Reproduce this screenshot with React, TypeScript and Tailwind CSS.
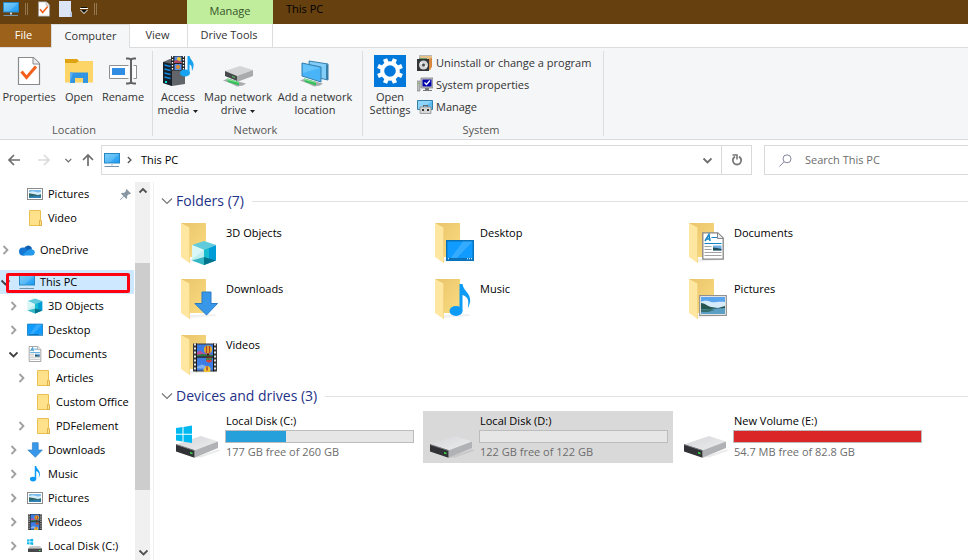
import { useId, useState } from "react";
import type { ReactNode } from "react";

/* ---------- small icons (16px) ---------- */

function MonitorIcon({ className = "size-4" }: { className?: string }) {
  const id = useId();
  return (
    <svg viewBox="0 0 16 16" className={className} aria-hidden="true">
      <defs>
        <linearGradient id={id} x1="0" y1="0" x2="1" y2="1">
          <stop offset="0" stopColor="#69c9f8" />
          <stop offset="1" stopColor="#1a98f2" />
        </linearGradient>
      </defs>
      <rect x=".5" y="1.5" width="15" height="9.5" fill={`url(#${id})`} stroke="#2787c4" />
      <path d="M1 2h14L6 10.5H1z" fill="#fff" opacity=".14" />
      <path d="M7 11.5h2v2H7z" fill="#c6d6e2" />
      <path d="M1 14h14v1H0z" fill="#7294ac" />
    </svg>
  );
}

function PictureIcon() {
  return (
    <svg viewBox="0 0 16 16" className="size-4" aria-hidden="true">
      <rect x=".5" y="2.5" width="15" height="11" fill="#fff" stroke="#8b8b8b" />
      <path d="M2 4h12v8H2z" fill="#7cbdf0" />
      <path d="M2 6l4-.7 5 1.2 3-.8v3H2z" fill="#d8edf8" />
      <path d="M2 7.2c3 .4 6 1.2 9 2l3-1V12H2z" fill="#31686a" />
      <path d="M2 10.8l7-.8 5 .3V12H2z" fill="#2f83b9" />
    </svg>
  );
}

function SmallFolderIcon() {
  return (
    <svg viewBox="0 0 16 16" className="size-4" aria-hidden="true">
      <path d="M2.500.5h11v9.500l1 1v4.500h-12z" fill="#ffe18b" stroke="#e9c04f" />
      <path d="M12.500 10.500l2 .5v4.500h-2z" fill="#ffe18b" stroke="#dba93a" strokeWidth=".8" />
    </svg>
  );
}

function OneDriveIcon() {
  return (
    <svg viewBox="0 0 16 16" className="size-4 overflow-visible" aria-hidden="true">
      <path d="M5 6.500a4.300 4.300 0 0 1 7.500-1.200L13 8l-8 2z" fill="#0f5fb0" />
      <circle cx="4" cy="9.500" r="4" fill="#1678d3" />
      <path d="M5 5.800l7 4.200-8 3.500z" fill="#1678d3" />
      <path d="M3 13.500h10a3 3 0 0 0 .6-5.900 4 4 0 0 0-4.800.7z" fill="#2498ea" />
    </svg>
  );
}

function CubeIcon({ className = "size-4" }: { className?: string }) {
  return (
    <svg viewBox="0 0 26 26" className={className} aria-hidden="true">
      <path d="M1 5L13 1l12 4-12 5z" fill="#5fcbdc" />
      <path d="M1 5l12 5v15L1 20.500z" fill="#bfeef0" />
      <path d="M1 5l12 5-12 9z" fill="#d9f7f6" />
      <path d="M13 10l12-5v15.500L13 25z" fill="#009cd6" />
      <path d="M13 10l5-2v14l-5 3z" fill="#16bdd0" />
      <path d="M1 20.500L13 17v8z" fill="#35b6c5" />
      <path d="M13 17l12 3.500L13 25z" fill="#00738c" />
    </svg>
  );
}

function DesktopIcon({ className = "size-4" }: { className?: string }) {
  return (
    <svg viewBox="0 0 28 22" className={className} aria-hidden="true">
      <path d="M.7.700h26.600v19.600H.7z" fill="#0f9bff" stroke="#0873ba" strokeWidth="1.400" />
      <path d="M17 1.400h9.600L10 19H4z" fill="#4db5ff" opacity=".6" />
      <path d="M1.400 18h25.200v1.600H1.400z" fill="#0d6fb5" />
      <path d="M2 18.300h1v1H2zM21 18.300h1v1h-1zM23 18.300h1v1h-1zM25 18.300h1v1h-1z" fill="#fff" />
    </svg>
  );
}

function DocumentIcon({ className = "size-4" }: { className?: string }) {
  return (
    <svg viewBox="0 0 22 28" className={className} aria-hidden="true">
      <path d="M.8.800h15L21.200 6v21.200H.8z" fill="#fff" stroke="#858585" strokeWidth="1.300" />
      <path d="M15.500 1v5.500H21" fill="#ececec" stroke="#858585" />
      <path d="M3 9l4-6.500L8 9M4.500 7h4" fill="none" stroke="#1584c6" strokeWidth="1.500" />
      <path d="M9.500 5.500H15M2.500 11.500h17" stroke="#1584c6" strokeWidth="1.200" />
      <path d="M2.500 14.500h7M2.500 17.500h7M2.500 20.500h17M2.500 23.500h17" stroke="#a2a2a2" />
      <path d="M11 13.500h8.500v5H11z" fill="#72afe4" />
      <path d="M11 15.500l4 .5 4.500 1v1.500H11z" fill="#224e59" />
    </svg>
  );
}

function DownArrowIcon({ className = "size-4" }: { className?: string }) {
  return (
    <svg viewBox="0 0 24 25" className={className} aria-hidden="true">
      <path d="M8 1h9v11.500h6.500L12.500 24 .8 12.500H8z" fill="#3997e9" stroke="#287cc5" />
    </svg>
  );
}

function MusicIcon({ className = "size-4" }: { className?: string }) {
  return (
    <svg viewBox="0 0 22 33" className={className} aria-hidden="true">
      <ellipse cx="7" cy="27" rx="6.500" ry="5" fill="#0d9bf5" />
      <path d="M10.500 0h3c.5 4 3 6 5 9 3.500 5 3.500 9 .5 15-.5-.5 1.500-7-1-10-1.500-2-4-3-4.500-3v16h-3z" fill="#0d9bf5" />
    </svg>
  );
}

function FilmIcon({ className = "size-4" }: { className?: string }) {
  return (
    <svg viewBox="0 0 24 28" className={className} aria-hidden="true">
      <path d="M0 0h24v28H0z" fill="#393939" />
      <path d="M2 0v28M22 0v28" stroke="#e5e5e5" strokeWidth="2" strokeDasharray="2 2" />
      <path d="M4 1h16v12H4zM4 14h16v13H4z" fill="#3d7de3" />
      <path d="M4 9l3-2 4 3 4-1 5 3v1H4z" fill="#b8509c" />
      <path d="M4 11.500l5-1 11 1v1.500H4z" fill="#287a43" />
      <circle cx="15" cy="6" r="4" fill="#edb92b" />
      <path d="M13.500 2.500v7M16.500 2.500v7" stroke="#b34326" strokeWidth="1.500" />
      <path d="M14 10h2v2h-2z" fill="#3a200c" />
      <circle cx="16" cy="16" r="3" fill="#d6402f" />
      <path d="M13 15.500h6" stroke="#2c8b4b" strokeWidth="1.500" />
      <circle cx="14" cy="26" r="3.500" fill="#efc334" />
      <path d="M14 23v4" stroke="#b34326" strokeWidth="1.500" />
      <path d="M4 23l5-2 3 1v3H4z" fill="#83b3ee" />
      <path d="M3.500 0v28M20.500 0v28M3 13.500h18" stroke="#191919" />
    </svg>
  );
}

function SmallDriveIcon() {
  return (
    <svg viewBox="0 0 16 16" className="size-4" aria-hidden="true">
      <path d="M0 1.500l2.500-.3v2.300H0zM3.200 1l3-.3v2.800h-3zM0 4.200h2.500v2.300L0 6.200zM3.200 4.200h3V7l-3-.4z" fill="#12b7ee" />
      <path d="M3 8h10l2 2.500H1z" fill="#c9cacc" />
      <path d="M1 10.500h14v3.500H1z" fill="#454749" />
      <path d="M12 12h1.500v1H12z" fill="#52e35a" />
    </svg>
  );
}

/* ---------- large icons (48px) ---------- */

function LargeFolder({ children }: { children: ReactNode }) {
  const id = useId();
  return (
    <span className="relative block size-12 shrink-0">
      <svg viewBox="0 0 48 48" className="size-12" aria-hidden="true">
        <defs>
          <linearGradient id={id} x1="0" y1="0" x2="1" y2="1">
            <stop offset="0" stopColor="#e9c46a" />
            <stop offset="1" stopColor="#fbdc81" />
          </linearGradient>
        </defs>
        <path d="M12 43l28-2-1-2-25 1z" fill="#000" opacity=".06" />
        <path d="M5 4h25v34H12z" fill={`url(#${id})`} />
        <path d="M5 4l8.500 4.500V44L5 38z" fill="#ffe7a2" />
        <path d="M13.500 8.500V44" stroke="#f2d17a" strokeWidth=".7" />
      </svg>
      {children}
    </span>
  );
}

function LargePictureIcon({ className }: { className: string }) {
  return (
    <svg viewBox="0 0 28 21" className={className} aria-hidden="true">
      <path d="M.7.700h26.600v19.600H.7z" fill="#fff" stroke="#909090" strokeWidth="1.200" />
      <path d="M2 2h24v17H2z" fill="#5ba5ee" />
      <path d="M2 7c4-2 7-1 10 0s8-1 14 0v6H2z" fill="#d6ebf9" />
      <path d="M2 8c4 0 6 3 10 4l7 1 7-2v4H2z" fill="#255551" />
      <path d="M2 14.500l24-1.500v6H2z" fill="#5b9fc4" />
      <path d="M2 15l9-1 5 1-7 2H2z" fill="#356f6c" />
    </svg>
  );
}

function DriveIcon({ system = false }: { system?: boolean }) {
  const id = useId();
  return (
    <svg viewBox="0 0 48 48" className="size-12 shrink-0" aria-hidden="true">
      <defs>
        <linearGradient id={id} x1="0" y1="0" x2="1" y2="1">
          <stop offset="0" stopColor="#d5d6d9" />
          <stop offset="1" stopColor="#eeeef0" />
        </linearGradient>
      </defs>
      <path d="M18 46.500l24-8 3 1-20 7z" fill="#000" opacity=".08" />
      <path d="M0 33.500l25-8.500 17 5.500-23 10z" fill={`url(#${id})`} />
      <path d="M18.500 39.500L42 30.500V37l-23.500 9.700z" fill="#b1b2b6" />
      <path d="M0 33.500l18.500 6v7.200L0 40.500z" fill="#303235" />
      <path d="M0 33.500l18.500 6" stroke="#75777a" />
      <path d="M14 41l2.500.7v1.500l-2.500-.7z" fill="#3be549" />
      {system && (
        <path
          d="M0 17l6.500-1v6.800H0zM7.500 15.900l8.500-1.300v8.200H7.500zM0 23.800h6.500v6.800L0 29.600zM7.500 23.800H16V32l-8.500-1.300z"
          fill="#00b9f0"
        />
      )}
    </svg>
  );
}

/* ---------- ribbon icons ---------- */

function CheckPageIcon({ className }: { className: string }) {
  return (
    <svg viewBox="0 0 24 30" className={className} aria-hidden="true">
      <path d="M1.500 1.500h15l6 6v21h-21z" fill="#fff" stroke="#8a8a8a" strokeWidth="1.200" />
      <path d="M16 1.500v6.500h6.500" fill="#eee" stroke="#8a8a8a" />
      <path d="M4.500 15.500l5 6L19 10.500" fill="none" stroke="#f2601c" strokeWidth="3" />
    </svg>
  );
}

function OpenFolderIcon() {
  return (
    <svg viewBox="0 0 32 32" className="size-8" aria-hidden="true">
      <path d="M2 4h12l3 3h13v6H2z" fill="#dfa313" />
      <path d="M2 8h11l3-2h14v21.500H2z" fill="#fdd566" />
      <path d="M7 28V17.500h18V28h-5v-5h-8v5z" fill="#3295e2" />
      <path d="M7 28V17.500h3z" fill="#58aff1" />
    </svg>
  );
}

function RenameIcon() {
  return (
    <svg viewBox="0 0 32 32" className="size-8" aria-hidden="true">
      <path d="M2.500 10.500h27v13h-27z" fill="#fff" stroke="#919191" />
      <path d="M5 13h13v7H5z" fill="#318de1" />
      <path d="M24 5v22" stroke="#f5f6f8" strokeWidth="5" />
      <path d="M24 4v24M19 3.500h2q3 0 3 2 0-2 3-2h2M19 28.500h2q3 0 3-2 0 2 3 2h2" fill="none" stroke="#626262" strokeWidth="2" />
    </svg>
  );
}

function AccessMediaIcon() {
  return (
    <svg viewBox="0 0 32 32" className="size-8" aria-hidden="true">
      <path d="M1 7l7-3 15 2v23l-13 2-9-3z" fill="#616569" />
      <path d="M1 7l9 2v22l-9-3z" fill="#17212b" />
      <path d="M2.500 10l6 1.500M2.500 14l6 1.500M2.500 18l6 1.500M2.500 22l6 1.500" stroke="#1488df" strokeWidth="1.500" />
      <path d="M3 27h2" stroke="#00e1d5" strokeWidth="2" />
      <path d="M9 1h14v14.500H9z" fill="#202226" />
      <path d="M10.500 1v15M21.500 1v15" stroke="#fff" strokeWidth="1.300" strokeDasharray="1.500 1.500" />
      <path d="M12.500 1.500h7v6h-7zM12.500 9h7v6h-7z" fill="#5a8fe5" />
      <circle cx="17" cy="4" r="2" fill="#efc834" />
      <path d="M12 6l3-1 5 2v1h-8z" fill="#ad4961" />
      <circle cx="16" cy="12" r="2" fill="#e28b2c" />
      <ellipse cx="23" cy="18" rx="5" ry="3.600" fill="#16a4f2" />
      <path d="M25.500 18V1h2c1 4 5 6 4 10-.3 3-1 4-1.600 5 .2-5-1-6-2.400-6.500V18z" fill="#16a4f2" />
    </svg>
  );
}

function Cable() {
  return (
    <g>
      <path d="M1 25.500l5-2 14 4 4 1-3 2-6 1-6-3z" fill="#a8adb0" />
      <path d="M5 23.500l12 3.500v3.500L6 27z" fill="#35bd58" />
      <path d="M5 23.500l12 3.500v1L5 25z" fill="#80e397" />
    </g>
  );
}

function NetworkDriveIcon() {
  return (
    <svg viewBox="0 0 32 32" className="size-8" aria-hidden="true">
      <path d="M3 16l15-5 13 4-16 6z" fill="#d3d5d7" />
      <path d="M15 21l16-6v6l-16 6z" fill="#a8aaac" />
      <path d="M3 16l12 5v5L3 21z" fill="#46494c" />
      <path d="M10 21l3 1v1l-3-1z" fill="#4ed761" />
      <Cable />
    </svg>
  );
}

function NetworkLocationIcon() {
  return (
    <svg viewBox="0 0 32 32" className="size-8" aria-hidden="true">
      <path d="M10 6l19 3v16l-18-4z" fill="#83cef8" stroke="#367fac" />
      <path d="M27 9l2 1v15l-2-1z" fill="#377ea6" />
      <path d="M3 8l19 4v15L3 21z" fill="#49b5f8" stroke="#367fac" />
      <path d="M4 9l17 4L4 18z" fill="#8bd6ff" opacity=".45" />
      <Cable />
    </svg>
  );
}

function SettingsIcon() {
  return (
    <svg viewBox="0 0 32 32" className="size-8" aria-hidden="true">
      <path d="M0 0h32v32H0z" fill="#0078dc" />
      <g transform="translate(16 16)">
        <circle r="7.800" fill="none" stroke="#fff" strokeWidth="4" />
        <g fill="#fff">
          {[22.5, 67.5, 112.5, 157.5, 202.5, 247.5, 292.5, 337.5].map((angle) => (
            <rect key={angle} x="-2.200" y="-13" width="4.400" height="5" transform={`rotate(${angle})`} />
          ))}
        </g>
      </g>
    </svg>
  );
}

function UninstallIcon() {
  return (
    <svg viewBox="0 0 16 16" className="size-4" aria-hidden="true">
      <path d="M2 0h13v3H2z" fill="#b9b9b9" />
      <path d="M3 1h12l-1 14H8z" fill="#e8c188" />
      <path d="M11 4l4-1v9l-3 3z" fill="#d7883f" />
      <path d="M0 4h12v12H0z" fill="#333638" />
      <circle cx="6.500" cy="10" r="4.500" fill="#d4d6d7" />
      <path d="M6.500 10L3 7.500M6.500 10l3.500 2" stroke="#fff" />
      <circle cx="6.500" cy="10" r="1.500" fill="#46494a" />
      <path d="M2 3h8v1H2z" fill="#6a9c65" />
    </svg>
  );
}

function SystemPropertiesIcon() {
  return (
    <svg viewBox="0 0 16 16" className="size-4" aria-hidden="true">
      <path d="M4 1h12v10H4z" fill="#c1c1c1" stroke="#777" strokeWidth=".7" />
      <path d="M5.500 2.500h9v7h-9z" fill="#0000ad" />
      <path d="M7.500 5.500l2 2 3.500-4" fill="none" stroke="#fff" strokeWidth="1.400" />
      <path d="M8 11h4v2h3v1H6v-1h2z" fill="#777" />
      <path d="M0 4h3v10H0z" fill="#bdbdbd" stroke="#757575" strokeWidth=".6" />
      <path d="M1 6h1v1H1z" fill="#45cc45" />
    </svg>
  );
}

function ManageIcon() {
  return (
    <svg viewBox="0 0 16 16" className="size-4" aria-hidden="true">
      <path d="M.5 1.500h15v9H.5z" fill="#5ebcf3" stroke="#377ea8" />
      <path d="M1 2h14L5 10H1z" fill="#8cd4fb" />
      <path d="M6 6h5v3h-1V7H7v2H6z" fill="#60676b" />
      <path d="M3 8h11v6.500H3z" fill="#d6d6d6" stroke="#858585" strokeWidth=".7" />
      <path d="M5 10h2v2H5zM10 10h2v2h-2z" fill="#333" />
    </svg>
  );
}

/* ---------- glyphs ---------- */

function Chevron({ dir, className = "" }: { dir: "right" | "down" | "up"; className?: string }) {
  const paths = {
    right: "M3.500 1L7.500 5l-4 4",
    down: "M1.500 3.500L5.500 7.500l4-4",
    up: "M1.500 6.500L5 3l3.500 3.500",
  };
  return (
    <svg viewBox="0 0 10 10" className={`size-[10px] shrink-0 ${className}`} aria-hidden="true">
      <path d={paths[dir]} fill="none" stroke="currentColor" strokeWidth="1.800" />
    </svg>
  );
}

function Arrow({ dir }: { dir: "left" | "right" | "up" }) {
  const paths = {
    left: "M13 7H2M7 2L2 7l5 5",
    right: "M1 7h11M7 2l5 5-5 5",
    up: "M7 13V2M2 7l5-5 5 5",
  };
  return (
    <svg viewBox="0 0 14 14" className="size-[14px]" aria-hidden="true">
      <path d={paths[dir]} fill="none" stroke="currentColor" strokeWidth="1.700" />
    </svg>
  );
}

function Caret() {
  return (
    <svg viewBox="0 0 5 3" className="ml-1 inline-block h-[3px] w-[5px] align-middle" aria-hidden="true">
      <path d="M0 0h5L2.500 3z" fill="#222" />
    </svg>
  );
}

/* ---------- ribbon ---------- */

function RibbonButton({ icon, lines, width, caret }: { icon: ReactNode; lines: string[]; width: string; caret?: boolean }) {
  return (
    <button type="button" className={`flex shrink-0 flex-col items-center whitespace-nowrap leading-[13px] ${width}`}>
      <span className="mb-[3px] flex h-8 items-center">{icon}</span>
      {lines.map((line, i) => (
        <span key={line}>
          {line}
          {caret && i === lines.length - 1 && <Caret />}
        </span>
      ))}
    </button>
  );
}

function RibbonGroup({ label, width, children }: { label: string; width: string; children: ReactNode }) {
  return (
    <section aria-label={label} className={`my-[3px] flex shrink-0 flex-col justify-between border-r border-[#dcdddf] ${width}`}>
      <div className="flex items-start pt-1">{children}</div>
      <h2 className="pr-1 text-center leading-3 text-[#555]">{label}</h2>
    </section>
  );
}

function TitleBar() {
  return (
    <header className="flex h-6 shrink-0 bg-[#66400f]">
      <div className="flex w-[187px] items-start pl-[3px] pt-px">
        <MonitorIcon />
        <span className="ml-[6px] mt-[2px] h-3 w-[3px] border-x border-[#927750]" />
        <button type="button" aria-label="Properties" className="ml-[9px]">
          <CheckPageIcon className="h-4 w-[14px]" />
        </button>
        <button type="button" aria-label="New folder" className="ml-2">
          <svg viewBox="0 0 13 16" className="h-4 w-[13px]" aria-hidden="true">
            <path d="M0 0h12v10l1 2v4H0z" fill="#dce5f6" />
            <path d="M11 11l2 1v4h-2z" fill="#b7c8e5" />
          </svg>
        </button>
        <button type="button" aria-label="Customize Quick Access Toolbar" className="ml-2 mt-[6px]">
          <svg viewBox="0 0 8 7" className="h-[7px] w-2" aria-hidden="true">
            <path d="M1 0h6v1H1z" fill="#111" />
            <path d="M0 1.500h8" stroke="#fff" />
            <path d="M0 3h8L4 7z" fill="#fff" />
            <path d="M1 3h6L4 6z" fill="#111" />
          </svg>
        </button>
        <span className="ml-[6px] mt-[2px] h-3 w-[3px] border-x border-[#927750]" />
      </div>
      <div className="w-[86px] bg-[#c0ed9c] text-center leading-[22px] text-[#37542a]">Manage</div>
      <h1 className="pl-[13px] leading-[18px] text-black">This PC</h1>
    </header>
  );
}

function RibbonTabs() {
  return (
    <nav aria-label="Ribbon tabs" className="flex h-6 shrink-0 text-[#333]">
      <button type="button" className="w-[51px] border-b border-[#dcdddf] bg-[#9c621b] pr-1 text-white">File</button>
      <button type="button" className="w-[79px] border-x border-t border-[#dcdddf] bg-[#f5f6f8]">Computer</button>
      <button type="button" className="w-[57px] border-b border-[#dcdddf] pr-[2px]">View</button>
      <button type="button" className="w-[86px] border-x border-b border-[#dcdddf] pr-[2px]">Drive Tools</button>
      <span className="flex-1 border-b border-[#dcdddf]" />
    </nav>
  );
}

function Ribbon() {
  return (
    <div className="flex h-[92px] shrink-0 border-b border-[#d9dadc] bg-[#f5f6f8] text-[#333]">
      <RibbonGroup label="Location" width="w-[153px]">
        <RibbonButton width="w-[58px]" lines={["Properties"]} icon={<CheckPageIcon className="h-[30px] w-6" />} />
        <RibbonButton width="w-[42px]" lines={["Open"]} icon={<OpenFolderIcon />} />
        <RibbonButton width="w-[46px]" lines={["Rename"]} icon={<RenameIcon />} />
      </RibbonGroup>
      <RibbonGroup label="Network" width="w-[210px]">
        <RibbonButton width="w-[50px]" lines={["Access", "media"]} caret icon={<AccessMediaIcon />} />
        <RibbonButton width="w-[70px]" lines={["Map network", "drive"]} caret icon={<NetworkDriveIcon />} />
        <RibbonButton width="w-[84px]" lines={["Add a network", "location"]} icon={<NetworkLocationIcon />} />
      </RibbonGroup>
      <RibbonGroup label="System" width="w-[241px]">
        <RibbonButton width="w-[54px]" lines={["Open", "Settings"]} icon={<SettingsIcon />} />
        <div className="flex flex-col gap-[6px] leading-4">
          <button type="button" className="flex gap-[3px]"><UninstallIcon />Uninstall or change a program</button>
          <button type="button" className="flex gap-[3px]"><SystemPropertiesIcon />System properties</button>
          <button type="button" className="flex gap-[3px]"><ManageIcon />Manage</button>
        </div>
      </RibbonGroup>
    </div>
  );
}

/* ---------- address row ---------- */

function AddressRow() {
  const [query, setQuery] = useState("");
  return (
    <div className="flex h-[42px] shrink-0 pt-[5px]">
      <div className="flex h-[30px] w-[101px] shrink-0 items-center pl-[7px] text-[#6d6d6d]">
        <button type="button" aria-label="Back"><Arrow dir="left" /></button>
        <button type="button" aria-label="Forward" className="ml-4 text-[#dadada]"><Arrow dir="right" /></button>
        <button type="button" aria-label="Recent locations" className="ml-3">
          <Chevron dir="down" className="scale-75" />
        </button>
        <button type="button" aria-label="Up" className="ml-2"><Arrow dir="up" /></button>
      </div>
      <div className="flex h-[30px] min-w-0 flex-1 items-center border border-[#d9d9d9] pl-[2px]">
        <MonitorIcon />
        <Chevron dir="right" className="ml-1 scale-75 text-[#555]" />
        <button type="button" className="ml-[7px]">This PC</button>
        <button type="button" aria-label="Previous locations" className="ml-auto mr-[9px] text-[#6d6d6d]">
          <Chevron dir="down" />
        </button>
        <button type="button" aria-label="Refresh" className="flex h-full w-[30px] items-center justify-center border-l border-[#d9d9d9] text-[#777]">
          <svg viewBox="0 0 12 12" className="size-3" aria-hidden="true">
            <path d="M4 2.600A4.200 4.200 0 1 0 8 2.600" fill="none" stroke="currentColor" strokeWidth="1.800" />
            <path d="M1.500 1h4.500v4.500" fill="none" stroke="currentColor" strokeWidth="1.600" />
          </svg>
        </button>
      </div>
      <label className="ml-3 flex h-[30px] w-[204px] shrink-0 items-center border-y border-l border-[#d9d9d9] pl-[14px]">
        <svg viewBox="0 0 13 13" className="size-[13px] shrink-0" aria-hidden="true">
          <circle cx="8" cy="4.800" r="4" fill="none" stroke="#83839b" />
          <path d="M5 7.800L.5 12.500" stroke="#83839b" />
        </svg>
        <input
          type="search"
          aria-label="Search This PC"
          placeholder="Search This PC"
          value={query}
          onChange={(e) => setQuery(e.target.value)}
          className="ml-[13px] min-w-0 flex-1 outline-none placeholder:text-[#6d6d6d]"
        />
      </label>
    </div>
  );
}

/* ---------- navigation pane ---------- */

type TreeItem = {
  name: string;
  icon: ReactNode;
  level: 0 | 1 | 2;
  state?: "open" | "closed";
  pinned?: boolean;
  selected?: boolean;
  spaced?: boolean;
};

const tree: TreeItem[] = [
  { name: "Pictures", icon: <PictureIcon />, level: 1, pinned: true },
  { name: "Video", icon: <SmallFolderIcon />, level: 1 },
  { name: "OneDrive", icon: <OneDriveIcon />, level: 0, state: "closed", spaced: true },
  { name: "This PC", icon: <MonitorIcon />, level: 0, state: "open", selected: true, spaced: true },
  { name: "3D Objects", icon: <CubeIcon />, level: 1, state: "closed" },
  { name: "Desktop", icon: <DesktopIcon />, level: 1, state: "closed" },
  { name: "Documents", icon: <DocumentIcon />, level: 1, state: "open" },
  { name: "Articles", icon: <SmallFolderIcon />, level: 2, state: "closed" },
  { name: "Custom Office", icon: <SmallFolderIcon />, level: 2 },
  { name: "PDFelement", icon: <SmallFolderIcon />, level: 2, state: "closed" },
  { name: "Downloads", icon: <DownArrowIcon />, level: 1, state: "closed" },
  { name: "Music", icon: <MusicIcon />, level: 1, state: "closed" },
  { name: "Pictures", icon: <PictureIcon />, level: 1, state: "closed" },
  { name: "Videos", icon: <FilmIcon />, level: 1, state: "closed" },
  { name: "Local Disk (C:)", icon: <SmallDriveIcon />, level: 1, state: "closed" },
];

const indents = { 0: "pl-0", 1: "pl-2", 2: "pl-4" };

function NavigationPane() {
  return (
    <nav aria-label="Navigation pane" className="w-[135px] shrink-0 overflow-hidden">
      <ul>
        {tree.map((item, i) => (
          <li key={i} className={`relative ${item.spaced ? "mt-2" : ""} ${item.selected ? "mr-px bg-[#cde8ff]" : ""}`}>
            <button type="button" className={`flex h-6 w-full items-center whitespace-nowrap ${indents[item.level]}`}>
              <span className="mr-[9px] w-[10px]">
                {item.state === "open" && <Chevron dir="down" className="text-[#404040]" />}
                {item.state === "closed" && <Chevron dir="right" className="text-[#a0a0a0]" />}
              </span>
              {item.icon}
              <span className="ml-[5px]">{item.name}</span>
              {item.pinned && (
                <svg viewBox="0 0 11 11" className="ml-auto mr-1 size-[11px]" aria-label="Pinned">
                  <path d="M6.500 0L11 4.500l-1 .7-1-.2-2 2 .2 2-.9.900L4 7.500.5 11 0 10.500 3.500 7 1 4.700l1-.9 2 .2 2-2-.2-1z" fill="#8796a3" />
                </svg>
              )}
            </button>
            {item.selected && (
              <span className="pointer-events-none absolute top-[3px] right-1 bottom-px left-[6px] rounded-[2px] border-3 border-[#fe0012]" />
            )}
          </li>
        ))}
      </ul>
    </nav>
  );
}

function ScrollBar() {
  return (
    <div className="flex w-[15px] shrink-0 flex-col items-center bg-[#f0f0f0] text-[#505050]">
      <button type="button" aria-label="Scroll up" className="flex h-[17px] items-center"><Chevron dir="up" /></button>
      <span className="flex-[64]" />
      <span className="w-full flex-[227] bg-[#cdcdcd]" />
      <span className="flex-[53]" />
      <button type="button" aria-label="Scroll down" className="flex h-[17px] items-center"><Chevron dir="down" /></button>
    </div>
  );
}

/* ---------- content ---------- */

const folders: { name: string; overlay: ReactNode }[] = [
  { name: "3D Objects", overlay: <CubeIcon className="absolute left-[15px] top-[21px] size-[26px]" /> },
  { name: "Desktop", overlay: <DesktopIcon className="absolute left-4 top-[21px] h-[22px] w-7" /> },
  { name: "Documents", overlay: <DocumentIcon className="absolute left-[18px] top-[13px] h-7 w-[22px]" /> },
  { name: "Downloads", overlay: <DownArrowIcon className="absolute left-[18px] top-4 h-[25px] w-6" /> },
  { name: "Music", overlay: <MusicIcon className="absolute left-[19px] top-[9px] h-[33px] w-[22px]" /> },
  { name: "Pictures", overlay: <LargePictureIcon className="absolute left-[15px] top-5 h-[21px] w-7" /> },
  { name: "Videos", overlay: <FilmIcon className="absolute left-[17px] top-3 h-[29px] w-6" /> },
];

const drives = [
  { name: "Local Disk (C:)", info: "177 GB free of 260 GB", used: 32, color: "bg-[#26a0da]", system: true },
  { name: "Local Disk (D:)", info: "122 GB free of 122 GB", used: 0, color: "bg-[#26a0da]", selected: true },
  { name: "New Volume (E:)", info: "54.7 MB free of 82.8 GB", used: 100, color: "bg-[#da2626]" },
];

function SectionHeading({ children }: { children: ReactNode }) {
  return (
    <h2 className="flex items-center text-[14px] leading-5 text-[#1e3287]">
      <svg viewBox="0 0 12 8" className="mr-[3px] h-2 w-3" aria-hidden="true">
        <path d="M1 1.500l5 5 5-5" fill="none" stroke="#777" strokeWidth="1.200" />
      </svg>
      {children}
      <span className="ml-2 h-px flex-1 bg-[#e2e2e2]" />
    </h2>
  );
}

function Content() {
  return (
    <main className="ml-[3px] min-w-0 flex-1 border-l border-[#f0f0f0] pl-[7px] pt-[9px]">
      <SectionHeading>Folders (7)</SectionHeading>
      <ul className="ml-2 mt-2 grid grid-cols-[repeat(auto-fill,250px)] gap-1">
        {folders.map((folder) => (
          <li key={folder.name}>
            <button type="button" className="flex h-[52px] w-full items-start pl-[7px] text-left">
              <LargeFolder>{folder.overlay}</LargeFolder>
              <span className="ml-[2px] pt-[6px] leading-4">{folder.name}</span>
            </button>
          </li>
        ))}
      </ul>
      <div className="mt-[3px]">
        <SectionHeading>Devices and drives (3)</SectionHeading>
      </div>
      <ul className="ml-2 mt-[5px] grid grid-cols-[repeat(auto-fill,250px)] gap-1">
        {drives.map((drive) => (
          <li key={drive.name} className={drive.selected ? "bg-[#d9d9d9]" : ""}>
            <button type="button" className="flex h-[52px] w-full items-start pl-[7px] text-left">
              <DriveIcon system={drive.system} />
              <span className="ml-px flex w-[189px] flex-col pt-[2px] leading-4">
                <span className="ml-px">{drive.name}</span>
                <span
                  role="meter"
                  aria-label={`${drive.name} space used`}
                  aria-valuemin={0}
                  aria-valuemax={100}
                  aria-valuenow={drive.used}
                  className="mt-px block h-[13px] border border-[#bcbcbc] bg-[#e6e6e6]"
                >
                  <span className={`block h-full ${drive.color}`} style={{ width: `${drive.used}%` }} />
                </span>
                <span className="ml-px mt-px text-[#6d6d6d]">{drive.info}</span>
              </span>
            </button>
          </li>
        ))}
      </ul>
    </main>
  );
}

export default function App() {
  return (
    <div className="flex h-screen flex-col overflow-hidden bg-white font-['Open_Sans','Noto_Sans',sans-serif] text-[11px] text-black">
      <TitleBar />
      <RibbonTabs />
      <Ribbon />
      <AddressRow />
      <div className="flex min-h-0 flex-1">
        <NavigationPane />
        <ScrollBar />
        <Content />
      </div>
    </div>
  );
}
